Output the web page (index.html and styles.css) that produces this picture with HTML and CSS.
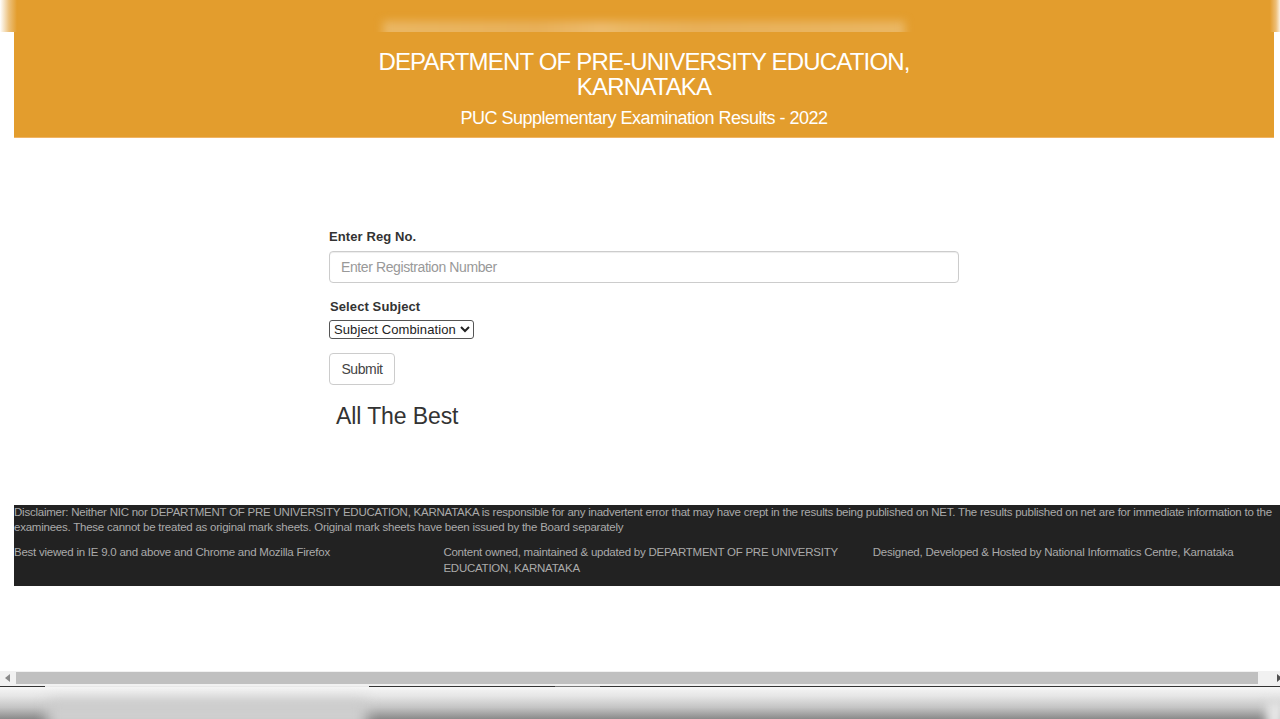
FILE: index.html
```html
<!DOCTYPE html>
<html lang="en">
<head>
<meta charset="utf-8">
<title>PUC Supplementary Examination Results - 2022</title>
<link rel="stylesheet" href="styles.css">
</head>
<body>
<div class="top-strip">
  <div class="ghost-title"></div>
</div>
<header class="banner">
  <h1 class="banner-title">DEPARTMENT OF PRE-UNIVERSITY EDUCATION, KARNATAKA</h1>
  <h2 class="banner-sub">PUC Supplementary Examination Results - 2022</h2>
</header>
<main class="content">
  <form class="result-form">
    <label class="field-label" for="reg">Enter Reg No.</label>
    <input class="text-input" id="reg" type="text" placeholder="Enter Registration Number">
    <label class="field-label subject-label" for="subject">Select Subject</label>
    <select class="subject-select" id="subject"><option>Subject Combination</option></select>
    <button class="submit-btn" type="button">Submit</button>
    <h3 class="best">All The Best</h3>
  </form>
</main>
<footer class="site-footer">
  <p class="disclaimer">Disclaimer: Neither NIC nor DEPARTMENT OF PRE UNIVERSITY EDUCATION, KARNATAKA is responsible for any inadvertent error that may have crept in the results being published on NET. The results published on net are for immediate information to the examinees. These cannot be treated as original mark sheets. Original mark sheets have been issued by the Board separately</p>
  <div class="footer-cols">
    <div>Best viewed in IE 9.0 and above and Chrome and Mozilla Firefox</div>
    <div>Content owned, maintained &amp; updated by DEPARTMENT OF PRE UNIVERSITY EDUCATION, KARNATAKA</div>
    <div>Designed, Developed &amp; Hosted by National Informatics Centre, Karnataka</div>
  </div>
</footer>
<div class="spacer"></div>
<div class="scrollbar">
  <svg class="arrow arrow-left" viewBox="0 0 6 8" width="6" height="8"><path d="M5 0v8L0 4z"/></svg>
  <div class="thumb"></div>
  <svg class="arrow arrow-right" viewBox="0 0 6 8" width="6" height="8"><path d="M1 0v8l5-4z"/></svg>
</div>
<div class="bottom-blur">
  <div class="seg seg-a"></div>
  <div class="seg seg-b"></div>
  <div class="seg seg-c"></div>
  <div class="seg seg-d"></div>
  <div class="seg seg-e"></div>
</div>
</body>
</html>
```
FILE: styles.css
```css
* { box-sizing: border-box; }
html, body { margin: 0; padding: 0; }
body {
  width: 1280px;
  height: 719px;
  overflow: hidden;
  background: #fff;
  color: #333;
  font-family: "Liberation Sans", Arial, sans-serif;
  display: flex;
  flex-direction: column;
}

.top-strip {
  height: 32px;
  flex: none;
  overflow: hidden;
  display: flex;
  justify-content: center;
  background: linear-gradient(90deg, #fff 0, #f6e3c4 4px, #ecc07a 9px, #e39d2d 17px, #e39d2d 1270px, #eebf78 1276px, #fbf0dd 1280px);
}
.ghost-title {
  width: 522px;
  height: 30px;
  margin: 21px 0 0 7px;
  background: linear-gradient(90deg, #eab764 0, #e8b05a 30%, #ecbb6e 42%, #eab764 46%, #e8b05a 60%, #eab764 100%);
  filter: blur(4px);
}

.banner {
  flex: none;
  height: 106px;
  margin: 0 6px 0 14px;
  padding-top: 17px;
  background: #e39d2d;
  border-bottom: 1px solid #f0b464;
  color: #fff;
  text-align: center;
}
.banner-title {
  width: 600px;
  margin: 0 auto;
  font-size: 24px;
  line-height: 25px;
  font-weight: 400;
  letter-spacing: -.82px;
}
.banner-sub {
  margin: 9px 0 0;
  font-size: 18px;
  line-height: 20px;
  font-weight: 400;
  letter-spacing: -.5px;
}

.content {
  flex: none;
  height: 367px;
  padding: 89px 0 0 329px;
}
.result-form {
  width: 630px;
  display: flex;
  flex-direction: column;
  align-items: flex-start;
}
.field-label {
  font-size: 13px;
  line-height: 20px;
  font-weight: 700;
  letter-spacing: .1px;
  margin-bottom: 4px;
}
.text-input {
  width: 630px;
  height: 32px;
  padding: 6px 11px;
  border: 1px solid #ccc;
  border-radius: 4px;
  background: #fff;
  box-shadow: inset 0 1px 1px rgba(0, 0, 0, .075);
  color: #555;
  font: 14px/20px "Liberation Sans", Arial, sans-serif;
  letter-spacing: -.4px;
}
.text-input::placeholder { color: #999; opacity: 1; }
.subject-label { margin: 14px 0 3px 1px; }
.subject-select {
  height: 19px;
  width: 145px;
  padding: 0;
  border: 1px solid #555;
  border-radius: 3px;
  background: #fff;
  color: #222;
  font: 13px "Liberation Sans", Arial, sans-serif;
  letter-spacing: .1px;
}
.submit-btn {
  width: 66px;
  height: 32px;
  margin-top: 14px;
  padding: 0;
  border: 1px solid #ccc;
  border-radius: 4px;
  background: #fff;
  color: #444;
  font: 14px/20px "Liberation Sans", Arial, sans-serif;
  letter-spacing: -.4px;
}
.best {
  margin: 18px 0 0 7px;
  font-size: 23px;
  line-height: 26px;
  font-weight: 400;
  letter-spacing: -.1px;
}

.site-footer {
  flex: none;
  width: 1266px;
  height: 81px;
  margin-left: 14px;
  background: #222;
  color: #aaa;
  font-size: 11.5px;
  line-height: 16px;
  letter-spacing: -.235px;
  overflow: hidden;
}
.disclaimer {
  width: 1262px;
  margin: 0;
  line-height: 15px;
}
.footer-cols {
  display: grid;
  grid-template-columns: repeat(3, 429.4px);
  margin-top: 9px;
}
.footer-cols > div { padding-right: 30px; }

.spacer { flex: 1; }

.scrollbar {
  flex: none;
  height: 15px;
  padding-top: 1px;
  display: flex;
  align-items: flex-start;
  background: #f1f1f1;
}
.arrow { flex: none; margin-top: 2px; }
.arrow-left { fill: #8a8a8a; margin-left: 5px; margin-right: 5px; }
.arrow-right { fill: #505050; margin-left: 18px; margin-right: -2px; }
.thumb {
  flex: 1;
  height: 12px;
  background: #c0c0c0;
}

.bottom-blur {
  position: relative;
  flex: none;
  height: 33px;
  display: flex;
  overflow: hidden;
  background: linear-gradient(#f8f8f8, #e6e6e6 30%, #c4c4c4 65%, #8a8a8a 100%);
}
.bottom-blur::before {
  content: "";
  position: absolute;
  left: 47px;
  width: 320px;
  top: 14px;
  bottom: -12px;
  background: #cfcfcf;
  filter: blur(7px);
}
.bottom-blur::after {
  content: "";
  position: absolute;
  right: -4px;
  width: 18px;
  top: 16px;
  bottom: -10px;
  background: #e6e6e6;
  filter: blur(5px);
}
.seg { height: 1px; background: #333; position: relative; z-index: 1; }
.seg-a { width: 45px; }
.seg-b { width: 324px; background: #e8e8e8; }
.seg-c { width: 186px; }
.seg-d { width: 45px; background: #777; }
.seg-e { flex: 1; }
```
